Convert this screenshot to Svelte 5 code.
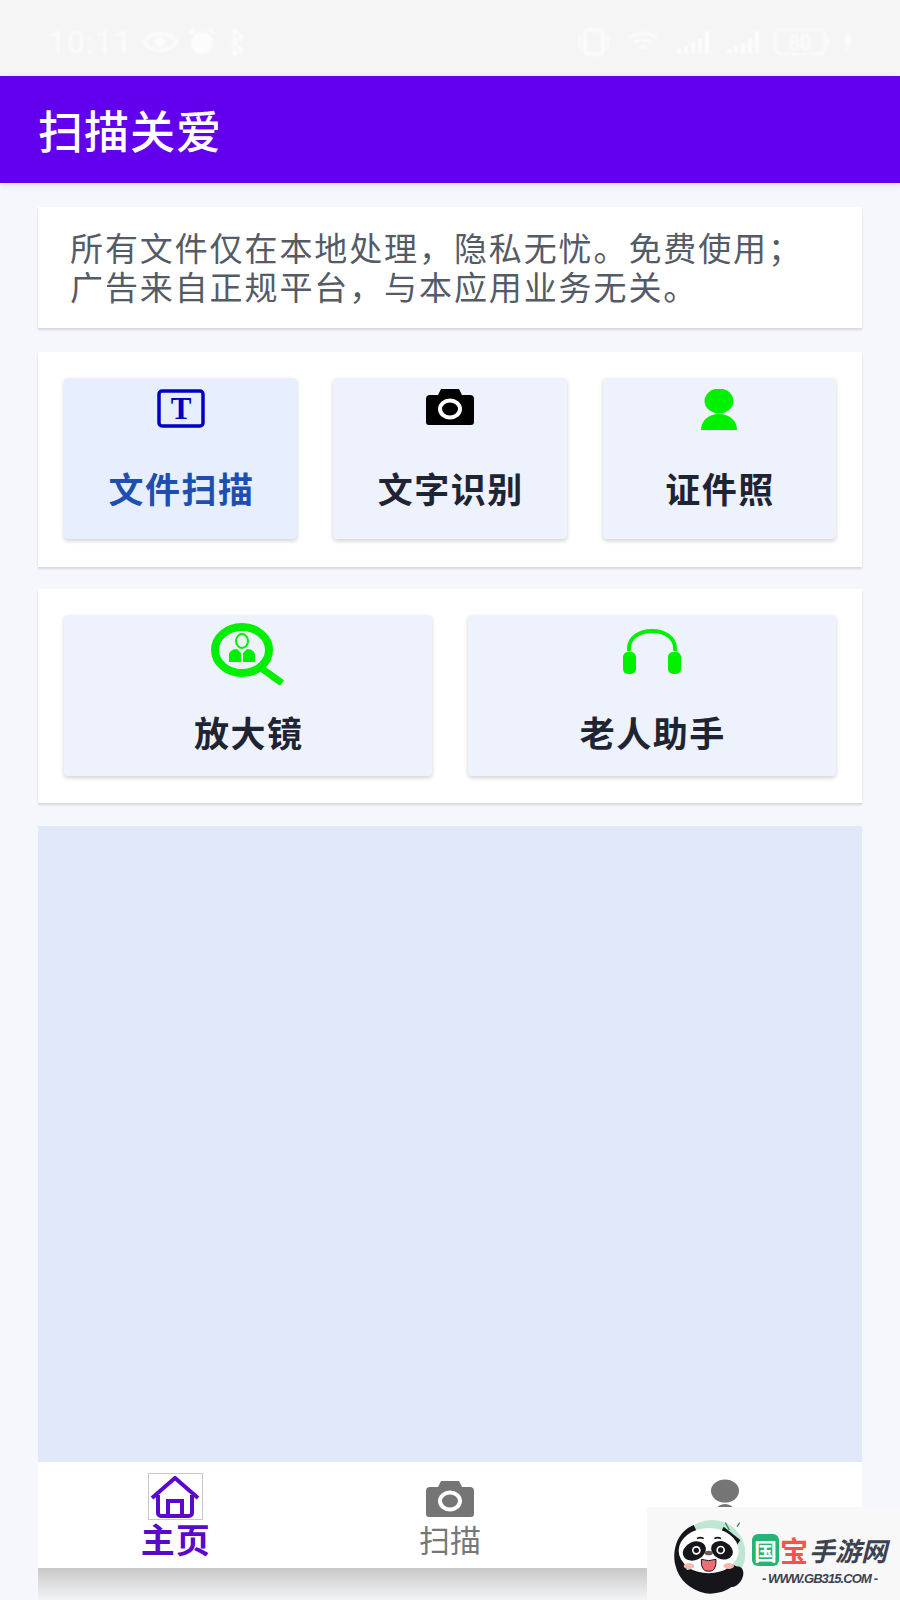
<script>
  let row1 = [
    { label: '文件扫描', icon: 'text', active: true },
    { label: '文字识别', icon: 'camera' },
    { label: '证件照', icon: 'person' }
  ]
  let row2 = [
    { label: '放大镜', icon: 'search' },
    { label: '老人助手', icon: 'phones' }
  ]
</script>

{#snippet camera(fill, w, h)}
  <svg width={w} height={h} viewBox="0 0 48 36">
    <path fill={fill} d="M4 6h8l3-6h18l3 6h8a4 4 0 0 1 4 4v23a3 3 0 0 1-3 3H3a3 3 0 0 1-3-3V10a4 4 0 0 1 4-4z" />
    <ellipse cx="24" cy="20" rx="10" ry="8.5" fill="none" stroke="#fff" stroke-width="4" />
  </svg>
{/snippet}

{#snippet icon(name)}
  {#if name === 'text'}
    <svg width="48" height="39" viewBox="0 0 48 39">
      <rect x="2" y="2" width="44" height="35" rx="3" fill="none" stroke="#0000c4" stroke-width="3.5" />
      <text x="24" y="30" text-anchor="middle" class="t-glyph">T</text>
    </svg>
  {:else if name === 'camera'}
    {@render camera('#000', 48, 36)}
  {:else if name === 'person'}
    <svg class="person" width="38" height="41" viewBox="0 0 38 41">
      <ellipse cx="19" cy="12" rx="14.5" ry="12.5" fill="#00f000" />
      <path fill="#00f000" d="M1 41c0-9 7-16 18-16s18 7 18 16z" />
    </svg>
  {:else if name === 'search'}
    <svg width="74" height="62" viewBox="0 0 74 62">
      <ellipse cx="31" cy="27" rx="27" ry="23" fill="none" stroke="#00ee00" stroke-width="8" />
      <path d="M50 45l21 15" stroke="#00ee00" stroke-width="7" fill="none" />
      <ellipse cx="31" cy="18" rx="6" ry="7" fill="none" stroke="#00ee00" stroke-width="2" />
      <path fill="#00ee00" d="M18 39v-7c0-3 3-6 8-6l4 4v9zM44 39v-7c0-3-3-6-8-6l-4 4v9z" />
    </svg>
  {:else}
    <svg class="phones" width="60" height="45" viewBox="0 0 60 45">
      <path d="M7 22v-3C7 9 17 2 30 2s23 7 23 17v3" fill="none" stroke="#00f000" stroke-width="4" />
      <rect x="1" y="23" width="13" height="22" rx="5" fill="#00f000" />
      <rect x="46" y="23" width="13" height="22" rx="5" fill="#00f000" />
    </svg>
  {/if}
{/snippet}

<div class="page">
  <div class="status">
    <span class="time">10:11</span>
    <svg width="104" height="30" viewBox="0 0 104 30" class="status-left">
      <path d="M2 15c7-11 25-11 33 0-8 11-26 11-33 0z" fill="none" stroke="#fff" stroke-width="3" />
      <circle cx="18" cy="15" r="5" fill="#fff" />
      <circle cx="60" cy="16" r="11" fill="#fff" />
      <path d="M48 6l5-4M72 6l-5-4" stroke="#fff" stroke-width="3" />
      <path d="M92 3l8 7-8 6 8 7-8 5V3z" fill="none" stroke="#fff" stroke-width="2.5" />
    </svg>
    <svg width="290" height="30" viewBox="0 0 290 30" class="status-right">
      <rect x="6" y="3" width="18" height="24" rx="3" fill="none" stroke="#fff" stroke-width="3" />
      <path d="M1 8v14M29 8v14" stroke="#fff" stroke-width="2" />
      <path d="M50 11c8-6 20-6 28 0M55 16c5-4 13-4 18 0M60 21c3-2 6-2 8 0" fill="none" stroke="#fff" stroke-width="2.5" />
      <path d="M100 26v-4M107 26v-7M114 26v-10M121 26v-14M128 26V4" stroke="#fff" stroke-width="4" />
      <path d="M150 26v-4M157 26v-7M164 26v-10M171 26v-14M178 26V4" stroke="#fff" stroke-width="4" />
      <rect x="196" y="3" width="50" height="24" rx="5" fill="none" stroke="#fff" stroke-width="2" />
      <text x="221" y="23" text-anchor="middle" class="batt">80</text>
      <path d="M249 11v8" stroke="#fff" stroke-width="2" />
      <path d="M270 4l-5 12h4l-2 10 7-14h-4z" fill="#fff" />
    </svg>
  </div>

  <header class="appbar">扫描关爱</header>

  <main class="content">
    <section class="card notice">
      <p>所有文件仅在本地处理，隐私无忧。免费使用；</p>
      <p>广告来自正规平台，与本应用业务无关。</p>
    </section>

    <section class="card tools three">
      {#each row1 as item}
        <button class="tool" class:active={item.active}>
          <span class="tool-icon">{@render icon(item.icon)}</span>
          <span class="tool-label">{item.label}</span>
        </button>
      {/each}
    </section>

    <section class="card tools two">
      {#each row2 as item}
        <button class="tool">
          <span class="tool-icon">{@render icon(item.icon)}</span>
          <span class="tool-label">{item.label}</span>
        </button>
      {/each}
    </section>

    <div class="ad"></div>

    <nav class="tabs">
      <button class="tab current">
        <span class="home-box">
          <svg width="50" height="42" viewBox="0 0 50 42">
            <path d="M2 22L25 2l23 20" fill="none" stroke="#5a08cc" stroke-width="4" />
            <path d="M8 19v18a3 3 0 0 0 3 3h28a3 3 0 0 0 3-3V19" fill="none" stroke="#5a08cc" stroke-width="4" />
            <path d="M18 39V25h14v14" fill="none" stroke="#5a08cc" stroke-width="4" />
          </svg>
        </span>
        <span class="tab-label">主页</span>
      </button>
      <button class="tab">
        <span class="tab-cam">{@render camera('#757575', 48, 36)}</span>
        <span class="tab-label">扫描</span>
      </button>
      <button class="tab">
        <svg class="tab-person" width="30" height="50" viewBox="0 0 30 50">
          <ellipse cx="15" cy="12" rx="14" ry="11.5" fill="#757575" />
          <path fill="#757575" d="M0 50c0-15 6-25 15-25s15 10 15 25z" />
        </svg>
      </button>
    </nav>
    <div class="tabs-shadow"></div>
  </main>

  <aside class="mark">
    <svg class="panda" width="75" height="75" viewBox="95 90 225 225">
      <circle cx="215" cy="190" r="100" fill="#bfe6d2" />
      <path fill="#16161a" d="M160 105C110 125 95 180 105 225c10 45 45 75 90 85 40 5 80-10 105-45v-30l-40-20-120 25c-20-40-10-90 30-115z" />
      <path fill="#16161a" d="M250 110l50 40-10 15-50-35z" />
      <ellipse cx="205" cy="182" rx="90" ry="68" fill="#fff" />
      <ellipse cx="162" cy="183" rx="36" ry="27" fill="#16161a" transform="rotate(-25 162 183)" />
      <ellipse cx="245" cy="181" rx="34" ry="26" fill="#16161a" transform="rotate(25 245 181)" />
      <circle cx="168" cy="181" r="13" fill="#fff" />
      <circle cx="241" cy="180" r="13" fill="#fff" />
      <circle cx="168" cy="181" r="8" fill="#16161a" />
      <circle cx="241" cy="180" r="8" fill="#16161a" />
      <path d="M170 146c6-4 14-4 20 0M222 146c6-4 14-4 20 0" fill="none" stroke="#16161a" stroke-width="5" />
      <ellipse cx="205" cy="189" rx="12" ry="7" fill="#6b5a5a" />
      <path d="M183 208q22 8 44 0 2 37-22 36-24 1-22-36z" fill="#ef6d72" stroke="#16161a" stroke-width="3" />
      <ellipse cx="146" cy="228" rx="16" ry="9" fill="#f7b8ae" />
      <ellipse cx="265" cy="228" rx="16" ry="9" fill="#f7b8ae" />
      <path fill="#16161a" d="M262 262c4-20 22-36 36-32 14 6 14 26 4 42-8 12-22 22-32 18-8-4-10-16-8-28z" />
      <path d="M255 98l12 22M298 98l-8 12" stroke="#2f8f5b" stroke-width="4" fill="none" />
    </svg>
    <div class="mark-text">
      <div class="mark-name">
        <span class="mark-guo">国</span><span class="mark-bao">宝</span><span class="mark-rest">手游网</span>
      </div>
      <div class="mark-url">- WWW.GB315.COM -</div>
    </div>
  </aside>
</div>

<style>
  :global(body) {
    margin: 0;
    background: #f5f7fc;
  }

  .page {
    position: relative;
    width: 900px;
    height: 1600px;
    overflow: hidden;
    background: #f5f7fc;
    font-family: "Noto Sans CJK SC", "Noto Sans", sans-serif;
  }

  .status {
    height: 76px;
    background: #f5f5f5;
    display: flex;
    align-items: center;
    padding: 8px 0 0 48px;
    box-sizing: border-box;
    color: #fff;
  }

  .time {
    font-family: Roboto, sans-serif;
    font-size: 32px;
    letter-spacing: 1px;
    width: 94px;
    opacity: 0.75;
    filter: blur(1px);
  }

  .status-left {
    opacity: 0.75;
    filter: blur(1px);
  }

  .status-right {
    margin-left: auto;
    margin-right: 31px;
    opacity: 0.75;
    filter: blur(1px);
  }

  .batt {
    font-family: Roboto, sans-serif;
    font-size: 20px;
    fill: #fff;
  }

  .appbar {
    height: 107px;
    background: #6200ee;
    color: #fff;
    font-size: 45px;
    font-weight: 500;
    line-height: 107px;
    padding-left: 38px;
    letter-spacing: 1px;
    box-shadow: 0 2px 6px rgba(0, 0, 0, 0.12);
    position: relative;
  }

  .content {
    padding: 24px 38px 0;
    display: flex;
    flex-direction: column;
  }

  .card {
    background: #fff;
    box-shadow: 0 2px 2px rgba(0, 0, 0, 0.13);
  }

  .notice {
    height: 121px;
    box-sizing: border-box;
    padding: 21px 32px 0;
    margin-bottom: 24px;
    color: #555b66;
    font-size: 33px;
    letter-spacing: 1.9px;
  }

  .notice p {
    margin: 0;
    line-height: 39px;
    white-space: nowrap;
  }

  .tools {
    display: grid;
    gap: 36px;
    padding: 26px 26px 28px;
    margin-bottom: 22px;
  }

  .three {
    grid-template-columns: repeat(3, 1fr);
  }

  .two {
    grid-template-columns: repeat(2, 1fr);
    padding-bottom: 27px;
  }

  .tool {
    height: 161px;
    border: 0;
    border-radius: 4px;
    background: #eef2fd;
    box-shadow: 0 2px 4px rgba(0, 0, 0, 0.18);
    padding: 11px 0 0;
    display: flex;
    flex-direction: column;
    align-items: center;
    font-family: inherit;
  }

  .tool.active {
    background: #e7eefd;
  }

  .tool-icon {
    height: 77px;
    display: block;
    line-height: 0;
  }

  .two .tool {
    padding-top: 8px;
  }

  .two .tool-icon {
    height: 87px;
  }

  .phones {
    margin-top: 6px;
  }

  .tool-label {
    font-size: 35px;
    font-weight: 700;
    line-height: 44px;
    letter-spacing: 1.5px;
    margin-right: -1.5px;
    color: #1f2433;
  }

  .active .tool-label {
    color: #1e4fae;
  }

  .t-glyph {
    font-family: "Liberation Serif", serif;
    font-weight: 700;
    font-size: 31px;
    fill: #0000c4;
  }

  .ad {
    height: 636px;
    margin-top: 1px;
    background: #e1e8fa;
  }

  .tabs {
    height: 106px;
    background: #fff;
    display: grid;
    grid-template-columns: repeat(3, 1fr);
  }

  .tab {
    border: 0;
    background: none;
    padding: 0;
    display: flex;
    flex-direction: column;
    align-items: center;
    font-family: inherit;
    color: #777;
  }

  .home-box {
    margin-top: 11px;
    width: 55px;
    height: 47px;
    box-sizing: border-box;
    border: 1px solid #c9c9c9;
    display: flex;
    align-items: center;
    justify-content: center;
  }

  .tab-cam {
    margin-top: 19px;
    height: 38px;
    line-height: 0;
  }

  .tab-label {
    font-size: 31px;
    line-height: 40px;
  }

  .current {
    color: #5a08cc;
  }

  .current .tab-label {
    font-size: 34px;
    font-weight: 700;
    line-height: 38px;
    letter-spacing: 1px;
    margin-right: -1px;
  }

  .tab-person {
    margin-top: 17px;
  }

  .tabs-shadow {
    height: 32px;
    background: linear-gradient(#c8c8c8, #f3f4f7);
  }

  .mark {
    position: absolute;
    left: 647px;
    top: 1507px;
    width: 253px;
    height: 93px;
    background: #f8f8f8;
    display: flex;
    align-items: flex-start;
    padding: 13px 0 0 25px;
    box-sizing: border-box;
  }

  .mark-text {
    margin-left: 5px;
    margin-top: 10px;
  }

  .mark-name {
    display: flex;
    align-items: center;
    font-weight: 700;
    font-size: 29px;
    line-height: 40px;
    white-space: nowrap;
  }

  .mark-guo {
    background: #22b573;
    color: #fff;
    border-radius: 6px;
    font-size: 23px;
    line-height: 32px;
    width: 27px;
    text-align: center;
  }

  .mark-bao {
    color: #f0544a;
    font-size: 28px;
    margin-left: 1px;
  }

  .mark-rest {
    color: #3c4250;
    font-style: italic;
    font-size: 26px;
    margin-left: 1px;
  }

  .mark-url {
    font-family: "Liberation Sans", sans-serif;
    font-style: italic;
    font-weight: 700;
    font-size: 13px;
    letter-spacing: -0.9px;
    color: #3c4250;
    text-align: center;
    margin-top: 1px;
  }
</style>
